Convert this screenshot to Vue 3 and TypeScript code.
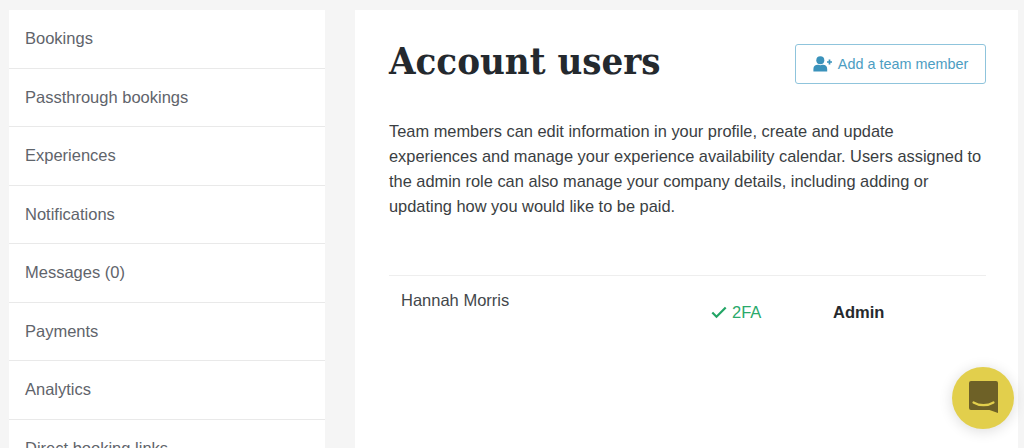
<script setup lang="ts">
const items: string[] = ['Bookings', 'Passthrough bookings', 'Experiences', 'Notifications', 'Messages (0)', 'Payments', 'Analytics', 'Direct booking links']
</script>

<template>
  <div class="page">
    <nav class="side">
      <a v-for="item in items" :key="item" class="item">{{ item }}</a>
    </nav>
    <main class="main">
      <header class="head">
        <h1>Account users</h1>
        <button class="add" type="button">
          <svg width="20" height="16" viewBox="0 0 20 16" aria-hidden="true">
            <circle cx="7.3" cy="4.2" r="4" fill="#3a92bb" />
            <path d="M0.4 15.5v-2.6c0-2.7 2-4.1 4.2-4.1h.9c1.1.5 2.5.5 3.6 0h.9c2.200 0 4.200 1.400 4.200 4.100v2.600z" fill="#3a92bb" />
            <path d="M16.500 3.500v5M14 6h5" stroke="#3a92bb" stroke-width="1.700" fill="none" />
          </svg>
          <span>Add a team member</span>
        </button>
      </header>
      <p class="intro">Team members can edit information in your profile, create and update experiences and manage your experience availability calendar. Users assigned to the admin role can also manage your company details, including adding or updating how you would like to be paid.</p>
      <div class="row">
        <div class="name">Hannah Morris</div>
        <div class="fa">
          <svg width="16" height="13" viewBox="0 0 16 13" aria-hidden="true">
            <path d="M1.300 6.500l4.200 4.200 9.200-9.200" stroke="#22a565" stroke-width="2.200" fill="none" />
          </svg>
          <span>2FA</span>
        </div>
        <div class="role">Admin</div>
      </div>
    </main>
    <div class="chat">
      <svg width="29" height="32" viewBox="0 0 29 32" aria-hidden="true">
        <path d="M2 0h25a2 2 0 0 1 2 2v30l-8.500-3H2a2 2 0 0 1-2-2V2a2 2 0 0 1 2-2z" fill="#6e6127" />
        <path d="M4.500 21.500c6 3.600 14 3.600 20 0" stroke="#e2cf4c" stroke-width="2.200" fill="none" stroke-linecap="round" />
      </svg>
    </div>
  </div>
</template>

<style>
html, body { margin: 0; background: #f5f5f5; overflow: hidden; }
</style>

<style scoped>
.page {
  height: 448px;
  box-sizing: border-box;
  padding: 10px 6px 0 9px;
  display: flex;
  gap: 30px;
  overflow: hidden;
  background: #f5f5f5;
  font-family: "Liberation Sans", Arial, sans-serif;
  position: relative;
}
.side {
  width: 316px;
  flex: none;
  background: #fff;
  display: flex;
  flex-direction: column;
  height: 500px;
}
.item {
  display: block;
  height: 58.5px;
  flex: none;
  box-sizing: border-box;
  padding: 18px 16px 0;
  font-size: 16.500px;
  line-height: 20px;
  color: #5f646b;
  border-bottom: 1px solid #e9e9e9;
}
.main {
  flex: 1;
  background: #fff;
  padding: 0 32px 0 34px;
  height: 500px;
}
.head {
  display: flex;
  justify-content: space-between;
  align-items: flex-start;
  padding-top: 28px;
}
h1 {
  margin: 0;
  font-family: "DejaVu Serif Condensed", "DejaVu Serif", serif;
  font-stretch: condensed;
  font-weight: 700;
  font-size: 38px;
  line-height: 46px;
  color: #24292e;
}
.add {
  width: 191px;
  height: 40px;
  margin-top: 6px;
  box-sizing: border-box;
  border: 1px solid #8fc4dc;
  border-radius: 3px;
  background: #fff;
  color: #4d9dc2;
  font-family: inherit;
  font-size: 14.400px;
  display: flex;
  align-items: center;
  justify-content: center;
  gap: 5px;
  padding: 0;
}
.intro {
  margin: 35px 0 0;
  max-width: 595px;
  font-size: 16.400px;
  line-height: 25px;
  color: #3a3e42;
}
.row {
  margin-top: 56px;
  border-top: 1px solid #eeeeee;
  display: flex;
  height: 70px;
}
.name {
  width: 322px;
  padding: 14px 0 0 12px;
  box-sizing: border-box;
  font-size: 16.500px;
  line-height: 20px;
  color: #43474b;
}
.fa {
  width: 122px;
  padding-top: 26px;
  height: 20px;
  display: flex;
  align-items: center;
  gap: 5px;
  font-size: 16.500px;
  line-height: 20px;
  color: #2aa96b;
}
.role {
  padding-top: 26px;
  font-size: 16.500px;
  line-height: 20px;
  font-weight: 700;
  color: #26292d;
}
.chat {
  position: absolute;
  left: 952px;
  top: 367px;
  width: 62px;
  height: 62px;
  border-radius: 50%;
  background: #e2cf4c;
  box-shadow: 0 2px 14px rgba(0, 0, 0, 0.14);
  display: flex;
  align-items: center;
  justify-content: center;
}
.chat svg {
  margin-bottom: 2px;
}
</style>
